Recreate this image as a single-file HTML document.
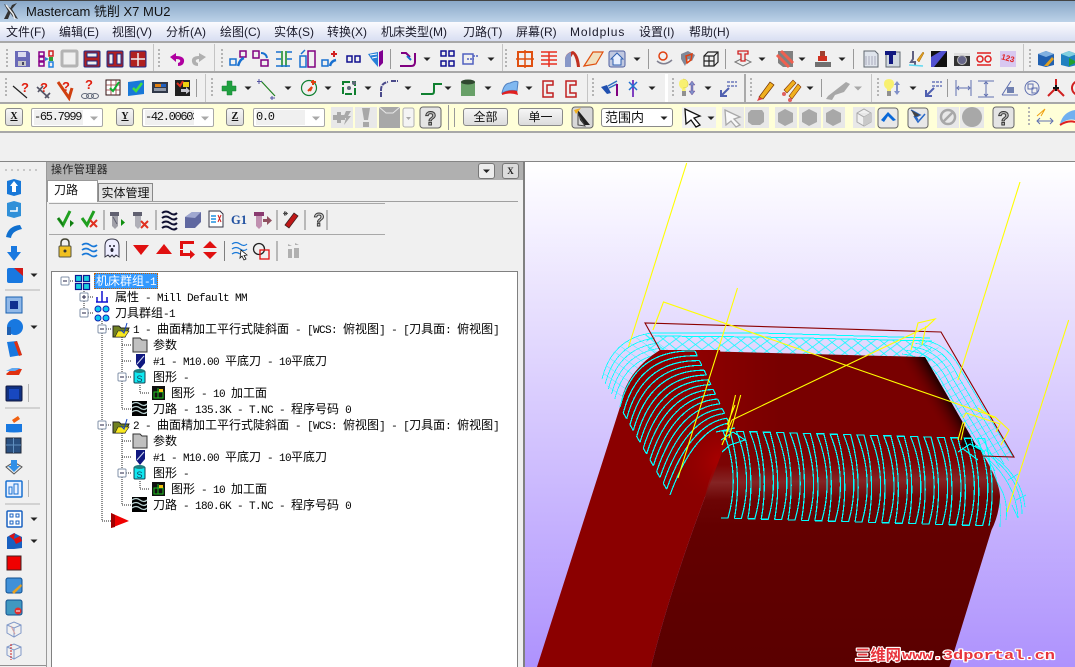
<!DOCTYPE html>
<html><head><meta charset="utf-8">
<style>
html,body{margin:0;padding:0;background:#f0f0f0}
#p{position:relative;width:1075px;height:667px;overflow:hidden;background:#f0f0f0;font-family:"Liberation Sans","Noto Sans CJK SC",sans-serif}
.a{position:absolute}
.m{position:absolute;top:23px;font-size:12px;line-height:18px;color:#1a1a2a;white-space:pre}
.t{position:absolute;height:16px;line-height:16px;font-family:"WenQuanYi Zen Hei","Noto Sans CJK SC",sans-serif;font-size:12px;color:#000;white-space:pre}
.t i{font-style:normal;font-family:"Liberation Mono",monospace;font-size:11px;letter-spacing:-.6px}
.b{position:absolute;top:108px;height:18px;border:1px solid #8a8a8a;border-radius:3px;background:linear-gradient(#f6f6f6,#dcdcdc);box-sizing:border-box;text-align:center;font-size:12px;line-height:17px;color:#111}
.c{position:absolute;top:108px;height:19px;width:72px;border:1px solid #a8a8a8;border-radius:2px;background:#fff;box-sizing:border-box}
.c span{position:absolute;left:2px;top:1px;width:49px;height:15px;background:#f0f0f0;overflow:hidden;font-family:"Liberation Mono",monospace;font-size:12px;letter-spacing:-1.3px;line-height:15px;color:#111;white-space:pre}
</style></head><body><div id="p">

<div class="a" style="left:0;top:0;width:1075px;height:1px;background:#444"></div>
<div class="a" style="left:0;top:1px;width:1075px;height:21px;background:linear-gradient(#8aa8c8,#bcd2e8)"></div>
<div class="a" style="left:26px;top:3px;font-size:13px;line-height:17px;color:#111;white-space:pre">Mastercam 铣削 X7 MU2</div>
<div class="a" style="left:0;top:22px;width:1075px;height:19px;background:linear-gradient(#fbfbfe,#d8def2)"></div>
<div class="m" style="left:6px">文件(F)</div><div class="m" style="left:59px">编辑(E)</div><div class="m" style="left:112px">视图(V)</div><div class="m" style="left:166px">分析(A)</div><div class="m" style="left:220px">绘图(C)</div><div class="m" style="left:274px">实体(S)</div><div class="m" style="left:327px">转换(X)</div><div class="m" style="left:381px">机床类型(M)</div><div class="m" style="left:463px">刀路(T)</div><div class="m" style="left:516px">屏幕(R)</div><div class="m" style="left:570px;letter-spacing:.9px">Moldplus</div><div class="m" style="left:639px">设置(I)</div><div class="m" style="left:689px">帮助(H)</div>

<div class="a" style="left:0;top:41px;width:1075px;height:2px;background:#a8a8a8"></div>
<div class="a" style="left:0;top:71px;width:1075px;height:2px;background:#a8a8a8"></div>
<div class="a" style="left:0;top:102px;width:1075px;height:2px;background:#a8a8a8"></div>
<div class="a" style="left:0;top:104px;width:1075px;height:27px;background:#ffffd8"></div>
<div class="a" style="left:0;top:131px;width:1075px;height:2px;background:#a8a8a8"></div>
<div class="a" style="left:0;top:161px;width:1075px;height:1px;background:#858585"></div>

<div class="b" style="left:5px;width:18px;font:bold 10px/16px 'Liberation Serif',serif;text-decoration:underline">X</div>
<div class="c" style="left:31px"><span>-65.7999</span></div>
<div class="b" style="left:116px;width:18px;font:bold 10px/16px 'Liberation Serif',serif;text-decoration:underline">Y</div>
<div class="c" style="left:142px"><span>-42.00603</span></div>
<div class="b" style="left:226px;width:18px;font:bold 10px/16px 'Liberation Serif',serif;text-decoration:underline">Z</div>
<div class="c" style="left:253px"><span>0.0</span></div>
<div class="b" style="left:463px;width:45px">全部</div>
<div class="b" style="left:518px;width:45px">单一</div>
<div class="b" style="left:601px;width:72px;top:108px;height:19px;text-align:left;padding-left:3px;background:#fff;font-size:13px">范围内</div>

<div class="a" style="left:0;top:162px;width:46px;height:503px;background:#f0f0f0"></div>
<div class="a" style="left:0;top:665px;width:46px;height:1px;background:#909090"></div>
<div class="a" style="left:46px;top:162px;width:1px;height:505px;background:#9a9a9a"></div>
<div class="a" style="left:47px;top:162px;width:476px;height:505px;background:#f0f0f0"></div>
<div class="a" style="left:47px;top:162px;width:476px;height:18px;background:#b0b0b0"></div>
<div class="a" style="left:51px;top:163px;font-size:11px;line-height:15px;color:#222;letter-spacing:.4px">操作管理器</div>
<div class="a" style="left:478px;top:163px;width:17px;height:16px;border:1px solid #777;border-radius:3px;box-sizing:border-box;background:#ececec"></div>
<div class="a" style="left:502px;top:163px;width:17px;height:16px;border:1px solid #777;border-radius:3px;box-sizing:border-box;background:#dcdcdc;font:bold 9px/14px 'Liberation Serif',serif;text-align:center;color:#222">X</div>
<div class="a" style="left:47px;top:201px;width:471px;height:1px;background:#a0a0a0"></div>
<div class="a" style="left:98px;top:183px;width:55px;height:18px;background:#e4e4e4;border:1px solid #888;border-bottom:0;box-sizing:border-box;font-size:12px;line-height:18px;text-align:center;color:#111">实体管理</div>
<div class="a" style="left:47px;top:180px;width:51px;height:22px;background:#fff;border:1px solid #999;border-bottom:0;box-sizing:border-box;font-size:12px;line-height:19px;color:#111;padding-left:6px">刀路</div>
<div class="a" style="left:49px;top:203px;width:336px;height:1px;background:#a8a8a8"></div>
<div class="a" style="left:49px;top:234px;width:336px;height:1px;background:#a8a8a8"></div>
<div class="a" style="left:51px;top:271px;width:467px;height:396px;background:#fff;border:1px solid #808080;border-bottom:0;box-sizing:border-box"></div>
<div class="a" style="left:523px;top:162px;width:2px;height:505px;background:#808080"></div>

<div class="a" style="left:94px;top:273px;width:64px;height:16px;background:#3399ff;outline:1px dotted #c86000;outline-offset:-1px"></div>
<div class="t" style="left:96px;top:273px;color:#fff">机床群组<i>-1</i></div>
<div class="t" style="left:115px;top:289px">属性<i> - Mill Default MM</i></div>
<div class="t" style="left:115px;top:305px">刀具群组<i>-1</i></div>
<div class="t" style="left:133px;top:321px"><i>1 - </i>曲面精加工平行式陡斜面<i> - [WCS: </i>俯视图<i>] - [</i>刀具面<i>: </i>俯视图<i>]</i></div>
<div class="t" style="left:153px;top:337px">参数</div>
<div class="t" style="left:153px;top:353px"><i>#1 - M10.00 </i>平底刀<i> - 10</i>平底刀</div>
<div class="t" style="left:153px;top:369px">图形<i> -</i></div>
<div class="t" style="left:171px;top:385px">图形<i> - 10 </i>加工面</div>
<div class="t" style="left:153px;top:401px">刀路<i> - 135.3K - T.NC - </i>程序号码<i> 0</i></div>
<div class="t" style="left:133px;top:417px"><i>2 - </i>曲面精加工平行式陡斜面<i> - [WCS: </i>俯视图<i>] - [</i>刀具面<i>: </i>俯视图<i>]</i></div>
<div class="t" style="left:153px;top:433px">参数</div>
<div class="t" style="left:153px;top:449px"><i>#1 - M10.00 </i>平底刀<i> - 10</i>平底刀</div>
<div class="t" style="left:153px;top:465px">图形<i> -</i></div>
<div class="t" style="left:171px;top:481px">图形<i> - 10 </i>加工面</div>
<div class="t" style="left:153px;top:497px">刀路<i> - 180.6K - T.NC - </i>程序号码<i> 0</i></div>

<svg class="a" style="left:0;top:0" width="1075" height="667" viewBox="0 0 1075 667">
<defs>
<linearGradient id="bg" x1="0" y1="162" x2="0" y2="667" gradientUnits="userSpaceOnUse"><stop offset="0" stop-color="#fff"/><stop offset="1" stop-color="#ae92fd"/></linearGradient>
<linearGradient id="low" x1="850" y1="430" x2="853" y2="667" gradientUnits="userSpaceOnUse"><stop offset="0" stop-color="#780000"/><stop offset=".14" stop-color="#7c0404"/><stop offset=".215" stop-color="#842424"/><stop offset=".29" stop-color="#6c0404"/><stop offset=".4" stop-color="#640000"/><stop offset="1" stop-color="#5a0000"/></linearGradient>
<linearGradient id="top" x1="690" y1="0" x2="780" y2="0" gradientUnits="userSpaceOnUse"><stop offset="0" stop-color="#900000"/><stop offset="1" stop-color="#780000"/></linearGradient>
<linearGradient id="blk" x1="952" y1="402" x2="932" y2="414" gradientUnits="userSpaceOnUse"><stop offset="0" stop-color="#1a0000"/><stop offset="1" stop-color="#780000" stop-opacity="0"/></linearGradient>
<radialGradient id="cor" cx="722" cy="462" r="50" gradientUnits="userSpaceOnUse"><stop offset="0" stop-color="#ac0000"/><stop offset="1" stop-color="#8c0000" stop-opacity="0"/></radialGradient>
<pattern id="h1" width="13" height="10" patternUnits="userSpaceOnUse" patternTransform="translate(0,335) rotate(1.200)"><path d="M0 0L6.500 5L13 0M0 10L6.500 5L13 10" fill="none" stroke="#0ff" stroke-width=".7"/></pattern>
<pattern id="h2" width="7" height="7" patternUnits="userSpaceOnUse" patternTransform="rotate(60)"><path d="M0 0V7" fill="none" stroke="#0ff" stroke-width=".8"/></pattern>
<pattern id="h3" width="8" height="8" patternUnits="userSpaceOnUse" patternTransform="rotate(-55)"><path d="M0 0V8" fill="none" stroke="#0ff" stroke-width=".7"/></pattern>
<path id="ca" d="M-3.500-1.500h7L0 2z" fill="#222"/>
<path id="cg" d="M-4-1.500h8L0 2.500z" fill="#a8a8a8"/>
<g id="gr" fill="#b4b4b4"><rect x="0" y="-10" width="2" height="2"/><rect x="0" y="-6" width="2" height="2"/><rect x="0" y="-2" width="2" height="2"/><rect x="0" y="2" width="2" height="2"/><rect x="0" y="6" width="2" height="2"/></g>
<path id="tp" d="M721 518L728 518Q740.500 474 723 431L730 431Q742.500 474 734.400 518.400" fill="none" stroke="#0ff" stroke-width="1.200"/>
<path id="fr" d="M920 340Q948 342 962 372L1013 457" fill="none" stroke="#0ff" stroke-width=".8"/>
<path id="fl" d="M602 379Q612 338 652 333" fill="none" stroke="#0ff" stroke-width=".8"/>
</defs>

<!-- viewport -->
<rect x="525" y="162" width="550" height="505" fill="url(#bg)"/>
<path d="M645 335L932 341L930 362L650 358Z" fill="url(#h1)"/>
<path d="M602 379Q612 338 652 333L680 352L620 402Z" fill="url(#h3)"/>
<path d="M932 338L1014 457L985 460L925 357Z" fill="url(#h2)"/>
<g shape-rendering="crispEdges" fill="none" stroke="#0ff">
<path d="M650 333L760 333L930 338M655 336L760 337L932 341" stroke-width="1"/>
<use href="#fl"/><use href="#fl" x="3.200" y="5"/><use href="#fl" x="6.400" y="10"/><use href="#fl" x="9.600" y="15"/><use href="#fl" x="12.800" y="20"/>
<use href="#fr"/><use href="#fr" x="-4.500" y="3.500"/><use href="#fr" x="-9" y="7"/><use href="#fr" x="-13.500" y="10.500"/><use href="#fr" x="-18" y="14"/><use href="#fr" x="-22.500" y="17.500"/>
<path stroke-width=".8" d="M985 450Q1022 474 1025 507M990 456Q1022 480 1022 514M980 452Q1016 480 1018 518L1012 505M993 467Q1002 495 1000 527M985 470Q1010 490 1006 520M1008 480L1018 474M1016 500L1026 495"/>
</g>
<path d="M537 667L620 407Q625 372 660 350L720 350L733 425L721 450L705 497Q670 590 651 667Z" fill="#8b0000"/>
<path d="M660 350L925 357L977 447L730 440L705 400Z" fill="url(#top)"/>
<path d="M925 357L977 447L920 440L900 357Z" fill="url(#blk)"/>
<path d="M730 432L977 445Q1000 480 1000 497Q999 515 991.500 530L949.400 667L651 667Q670 590 705 497Q712 465 730 432Z" fill="url(#low)"/>
<path d="M966 432L981 451L960 446Z" fill="#200000"/>
<path d="M668 480L700 420L735 430L721 455L705 497Z" fill="url(#cor)"/>
<g shape-rendering="crispEdges" fill="none" stroke="#0ff" stroke-width="1.200">
<path d="M620 407Q634 349 695 351M623.300 412.900Q638 354.300 697.300 355.800M626.700 418.700Q642 359.700 699.500 360.600M630 424.600Q646 365 701.800 365.400M633.300 430.500Q650 370.300 704.100 370.200M636.700 436.400Q654 375.700 706.400 375M640 442.200Q658 381 708.600 379.800M643.300 448.100Q662 386.300 710.900 384.600M646.600 454Q666 391.700 713.200 389.400M650 459.800Q670 397 715.400 394.200M653.300 465.700Q674 402.300 717.700 399M656.600 471.600Q678 407.700 720 403.800M660 477.400Q682 413 722.200 408.600M663.300 483.300Q686 418.300 724.500 413.400M666.600 489.200Q690 423.700 726.800 418.200M670 495Q694 429 729 423"/>
<path d="M695 351L697.300 355.800M699.500 360.600L701.800 365.400M704.100 370.200L706.400 375M708.600 379.800L710.900 384.600M713.200 389.400L715.400 394.200M717.700 399L720 403.800M722.200 408.600L724.500 413.400M726.800 418.200L729 423M623.300 412.900L626.700 418.700M630 424.600L633.300 430.500M636.700 436.400L640 442.200M643.300 448.100L646.600 454M650 459.800L653.300 465.700M656.600 471.600L660 477.400M663.300 483.300L666.600 489.200"/>
<use href="#tp"/><use href="#tp" x="13.400" y=".4"/><use href="#tp" x="26.800" y=".8"/><use href="#tp" x="40.200" y="1.200"/><use href="#tp" x="53.600" y="1.600"/><use href="#tp" x="67" y="2"/><use href="#tp" x="80.400" y="2.400"/><use href="#tp" x="93.800" y="2.800"/><use href="#tp" x="107.200" y="3.200"/><use href="#tp" x="120.600" y="3.600"/><use href="#tp" x="134" y="4"/><use href="#tp" x="147.400" y="4.400"/><use href="#tp" x="160.800" y="4.800"/><use href="#tp" x="174.200" y="5.200"/><use href="#tp" x="187.600" y="5.600"/><use href="#tp" x="201" y="6"/><use href="#tp" x="214.400" y="6.400"/><use href="#tp" x="227.800" y="6.800"/><use href="#tp" x="241.200" y="7.200"/><use href="#tp" x="254.600" y="7.600"/>
<path d="M721 440L733 432L745 440L730 445L722 452M716 432L735 428M958 452L970 444L985 452L975 445M962 448L978 460"/>
</g>
<g fill="none" stroke="#8b0000" stroke-width="1.100"><path d="M660 350L645 323L941 332L1014 457L982 456"/></g>
<g fill="none" stroke="#ff0" stroke-width="1.100">
<path d="M686.700 163L628.500 347M737.500 288L678 478"/>
<path d="M653 330L663.500 302L995 417L1009 430L1001 445"/>
<path d="M732 420L926.600 327L935 319L918 323L911 350M926 326L922 345"/>
<path d="M1020 182L958 380M1068.700 320L1007 512"/>
<path d="M725 440L735.500 395M729 438L740.700 395M722 445L732 420M727 425L735 405"/>
<path d="M963 422L958 440M965 422L961 440M963 418L966 413L1000 424L996 432M978 408L994 418"/>
</g>
<g font-family="Liberation Sans,Noto Sans CJK SC,sans-serif" font-weight="bold" fill="#e8343c" stroke="#fff" stroke-width="2.200" paint-order="stroke" stroke-linejoin="round">
<text x="855" y="660" font-size="15" textLength="46" lengthAdjust="spacingAndGlyphs">三维网</text>
<text x="902" y="659" font-size="13" font-family="Liberation Mono,monospace" textLength="153" lengthAdjust="spacingAndGlyphs">www.3dportal.cn</text>
</g>

<!-- title logo -->
<path d="M4 4L12 9L8 19L4 19L8 11ZM17 3L12 9L18 19L13 17L9 11L12 5Z" fill="#333"/><path d="M6 5L13 14L15 19" stroke="#eee" stroke-width="1.500" fill="none"/>

<!-- separators/grips toolbars -->
<g fill="#c4c4c4"><rect x="153" y="44" width="1" height="27"/><rect x="214" y="44" width="1" height="27"/><rect x="502" y="44" width="1" height="27"/><rect x="1023" y="44" width="1" height="27"/><rect x="205" y="74" width="1" height="28"/><rect x="587" y="74" width="1" height="28"/><rect x="665" y="74" width="3" height="28" fill="#fff"/><rect x="744" y="74" width="2" height="28" fill="#aaa"/><rect x="871" y="74" width="1" height="28"/></g>
<g fill="#999"><rect x="390" y="49" width="1" height="20"/><rect x="648" y="49" width="1" height="20"/><rect x="725" y="49" width="1" height="20"/><rect x="853" y="49" width="1" height="20"/><rect x="196" y="79" width="1" height="18"/><rect x="821" y="79" width="1" height="18"/><rect x="947" y="79" width="1" height="18"/><rect x="448" y="105" width="1" height="25"/><rect x="454" y="108" width="1" height="19"/></g>
<use href="#gr" x="6" y="59"/><use href="#gr" x="158" y="59"/><use href="#gr" x="221" y="59"/><use href="#gr" x="505" y="59"/><use href="#gr" x="1029" y="59"/><use href="#gr" x="5" y="88"/><use href="#gr" x="211" y="88"/><use href="#gr" x="592" y="88"/><use href="#gr" x="672" y="88"/><use href="#gr" x="750" y="88"/><use href="#gr" x="877" y="88"/><use href="#gr" x="1028" y="117"/>

<!-- row1 -->
<g transform="translate(22,59)"><path d="M-7-8H6L8-6V8H-7Z" fill="#6a6ab8"/><rect x="-4" y="-7" width="8" height="5" fill="#dcdcf0"/><rect x="-4" y="2" width="8" height="5" fill="#c8c8c8"/><rect x="0" y="3" width="2" height="3" fill="#446"/></g>
<g transform="translate(46,59)"><g fill="none" stroke="#880088" stroke-width="1.500"><rect x="-7" y="-7" width="5" height="4"/><rect x="-7" y="-2" width="5" height="4"/><rect x="-7" y="3" width="5" height="4"/></g><path d="M-1-2L3 0L-1 2Z" fill="#2a80d0"/><rect x="3" y="-8" width="4" height="5" fill="none" stroke="#d02020" stroke-width="1.500"/><rect x="3" y="-2" width="4" height="4" fill="#30a030"/><rect x="3" y="3" width="4" height="5" fill="none" stroke="#2080e0" stroke-width="1.500"/></g>
<rect x="62" y="51" width="15" height="15" rx="1" fill="#f0f0f0" stroke="#b4b4b4" stroke-width="3"/>
<g fill="#f0f0f0" stroke="#1a2a88" stroke-width="1"><rect x="84" y="51" width="16" height="16" rx="1" fill="#b02020"/><rect x="87" y="53" width="10" height="4"/><rect x="87" y="61" width="10" height="4"/><rect x="107" y="51" width="16" height="16" rx="1" fill="#b02020"/><rect x="109" y="54" width="4" height="10"/><rect x="117" y="54" width="4" height="10"/><rect x="130" y="51" width="16" height="16" rx="1" fill="#b02020"/></g>
<path d="M138 53V66M131 59H145" stroke="#f0f0f0" stroke-width="1.500"/>
<path d="M170 57L176 53V56Q185 56 184 62Q183 66 178 66V63Q181 62 180 60Q179 59 176 59V62Z" fill="#b000a0"/>
<path d="M206 57L199 53V56Q191 56 192 62Q193 66 198 66V63Q195 62 196 60Q197 59 199 59V62Z" fill="#b0b0b0"/>
<g fill="none" stroke-width="1.500">
<g transform="translate(238,59)"><rect x="2" y="-8" width="6" height="6" stroke="#800080"/><rect x="-8" y="0" width="6" height="6" stroke="#1870d0"/><path d="M0 7Q2 0 6-1" stroke="#1870d0" stroke-width="2.500"/></g>
<g transform="translate(261,59)"><rect x="-8" y="-8" width="6" height="7" stroke="#800080"/><rect x="0" y="1" width="7" height="6" stroke="#800080"/><path d="M0-6Q5-6 6-1" stroke="#1870d0" stroke-width="2"/></g>
<g transform="translate(284,59)"><path d="M-2-8V8M2-8V8" stroke="#182"/><path d="M-8-7H-3M-8 0H-3M3-7H8M3 0H8M-8 7H6" stroke="#1870d0"/></g>
<g transform="translate(307,59)"><rect x="1" y="-8" width="7" height="16" stroke="#800080"/><rect x="-7" y="-3" width="6" height="11" stroke="#1870d0"/><path d="M-6-5L-2-9" stroke="#1870d0"/></g>
<g transform="translate(330,59)"><rect x="-8" y="1" width="6" height="6" stroke="#1870d0"/><path d="M0 7Q1 2 6 1" stroke="#1870d0" stroke-width="2.500"/><path d="M4-8V-2M1-5H7" stroke="#d02020" stroke-width="2"/></g>
<rect x="347" y="56" width="5" height="6" stroke="#101090"/><rect x="355" y="56" width="5" height="6" stroke="#101090"/>
<g transform="translate(408,59)"><path d="M-8 7H3Q7 7 7 3V-6M-7-6H-2L2-2" stroke="#800080" stroke-width="2"/><path d="M-1-3L3 1" stroke="#1870d0" stroke-width="2"/></g>
<g stroke="#101090"><rect x="441" y="51" width="5" height="5"/><rect x="449" y="51" width="5" height="5"/><rect x="441" y="61" width="5" height="5"/><rect x="449" y="61" width="5" height="5"/></g>
<g transform="translate(471,59)" stroke="#5060c0"><rect x="-8" y="-5" width="10" height="10"/><path d="M2 -3H8M-4 0H3" stroke-dasharray="2 1"/></g>
<g stroke="#e05010" stroke-width="2"><rect x="518" y="52" width="14" height="14"/><path d="M525 50V68M516 59H534" stroke-width="1.500"/></g>
<path d="M541 52H557M541 56H557M541 60H557M541 64H557M549 52V67" stroke="#e83020" stroke-width="1.500"/>
</g>
<path d="M379 52L383 50V63L379 67Z" fill="#800090"/><path d="M368 54L378 52V67L372 60Z" fill="#2880d8"/><path d="M370 55L377 54M372 58L377 57" stroke="#fff"/>
<path d="M565 67V60Q565 53 573 51Q579 54 580 67H577Q576 58 573 54Z" fill="#c03020"/><path d="M565 67V60Q565 54 571 52V67Z" fill="#8898c8"/>
<path d="M584 66L593 52L603 52L596 64Z" fill="#f0e0c0" stroke="#e05010" stroke-width="1.200"/>
<g transform="translate(617,59)"><rect x="-8" y="-8" width="16" height="16" rx="2" fill="#c0c8e0" stroke="#5060a0"/><path d="M-4 6V0H-6L0-6L6 0H4V6Z" fill="#e8f0ff" stroke="#3060b0"/></g>
<g transform="translate(664,59)" fill="none" stroke="#e04010" stroke-width="1.500"><circle cx="-1" cy="-3" r="4"/><path d="M-7 2Q0 8 8 1" stroke="#808090"/></g>
<g transform="translate(688,59)"><path d="M-7-5L0-8L7-4L4 2L0 0L-3 7L-7 0Z" fill="#808898"/><path d="M-2-3L4-5L3 1L-1 4Z" fill="none" stroke="#e04010" stroke-width="1.500"/></g>
<g transform="translate(711,59)" fill="none" stroke="#222" stroke-width="1.200"><path d="M-7-3L-3-7H7V3L3 7H-7Z"/><path d="M-7-3H3V7M3-3L7-7M-2-3V7M-7 2H3"/></g>
<g transform="translate(743,59)"><path d="M-8 3L0-1L8 3L0 7Z" fill="none" stroke="#777"/><path d="M-5-8H5V-5H2V2H-2V-5H-5Z" fill="#e8e8e8" stroke="#d02020" stroke-width="1.300"/></g>
<g transform="translate(785,59)"><path d="M-7-8H8V8H-2L-7 4Z" fill="#808080"/><path d="M-8-4L4 8M-4-8L8 4" stroke="#f06050" stroke-width="3"/></g>
<g transform="translate(823,59)"><rect x="-3" y="-8" width="5" height="5" fill="#a04030"/><rect x="-5" y="-3" width="9" height="5" fill="#d03020"/><rect x="-8" y="3" width="16" height="5" fill="#707070"/></g>
<g transform="translate(871,59)"><path d="M-7-8H4L7-5V8H-7Z" fill="#dfe4ec" stroke="#606870"/><path d="M-5 -3V6M-2 -3V6M1 -3V6M4 -3V6" stroke="#aab"/></g>
<g transform="translate(893,59)"><rect x="-7" y="-7" width="14" height="15" fill="#d0d8e0" stroke="#606870"/><path d="M-8-8H3V-4H0V5H-4V-4H-8Z" fill="#101880"/></g>
<g transform="translate(916,59)"><path d="M-3-8V0L-5 3H-1V7" stroke="#606080" stroke-width="2" fill="none"/><path d="M1 1L7-7L8-6L3 3Z" fill="#e0a020" stroke="#a06000" stroke-width=".5"/><path d="M-7 6L7 7" stroke="#60d8f0" stroke-width="1.500"/></g>
<g transform="translate(939,59)"><rect x="-8" y="-8" width="16" height="16" fill="#101010"/><path d="M-8 8V-2L2-8H8L-5 8Z" fill="#5050d0"/></g>
<g transform="translate(962,59)"><rect x="-8" y="-6" width="16" height="13" fill="#333"/><rect x="-8" y="-6" width="16" height="3" fill="#ddd"/><circle cx="0" cy="1" r="4.500" fill="#668" stroke="#bbb"/></g>
<g transform="translate(984,59)" fill="none" stroke="#e02020" stroke-width="1.500"><path d="M-7-6H7M-7 6H7"/><circle cx="-4" cy="0" r="3"/><circle cx="4" cy="0" r="3"/></g>
<g transform="translate(1008,59)"><rect x="-8" y="-8" width="16" height="16" fill="#d8c8f0"/><text x="-7" y="2" font-size="8" font-weight="bold" fill="#e02020" font-family="Liberation Sans,sans-serif" transform="rotate(15)">123</text></g>
<g transform="translate(1046,59)"><path d="M-8-5L0-8L8-5V6L0 8L-8 6Z" fill="#2060b0"/><path d="M-8-5L0-8L8-5L0-2Z" fill="#80b0e0"/><path d="M-2 7L6-2L8 0L2 7Z" fill="#e0a020"/></g>
<g transform="translate(1069,59)"><path d="M-8-5L0-8L8-5V6L0 8L-8 6Z" fill="#2080c0"/><path d="M-8-5L0-8L8-5L0-2Z" fill="#80d0e0"/><path d="M0-1L8 3L0 7Z" fill="#20a030"/></g>
<use href="#ca" x="427" y="59"/><use href="#ca" x="491" y="59"/><use href="#ca" x="637" y="59"/><use href="#ca" x="762" y="59"/><use href="#ca" x="802" y="59"/><use href="#ca" x="842" y="59"/>

<!-- row2 -->
<g font-family="Liberation Sans,sans-serif" font-weight="bold" font-size="13" fill="#e02010">
<text x="21" y="92">?</text><text x="40" y="92">?</text><text x="62" y="91">?</text><text x="85" y="89">?</text></g>
<path d="M13 86L27 98" stroke="#222" stroke-width="1.200"/>
<path d="M37 87L49 98M38 92L43 86M45 98L50 93" stroke="#556" stroke-width="1.700" fill="none"/>
<path d="M58 82L69 98L72 88" stroke="#d04010" stroke-width="3" fill="none"/>
<g fill="none" stroke="#606878"><ellipse cx="85" cy="96" rx="3.500" ry="2.500"/><ellipse cx="90" cy="96" rx="3.500" ry="2.500"/><ellipse cx="95" cy="96" rx="3.500" ry="2.500"/></g>
<g transform="translate(113,88)"><rect x="-7" y="-8" width="14" height="15" fill="#fff" stroke="#301010"/><path d="M-7-3H7M-7 2H7M-2-8V7M3-8V7" stroke="#903030" stroke-width=".8"/><path d="M-3 0L0 3L6-6" stroke="#10b030" stroke-width="2" fill="none"/></g>
<g transform="translate(136,88)"><path d="M-8-6L8-8V6L-8 8Z" fill="#1878d8"/><path d="M-3 0L0 3L6-5" stroke="#40e040" stroke-width="2.500" fill="none"/></g>
<g transform="translate(160,88)"><rect x="-8" y="-6" width="16" height="11" fill="#303848"/><rect x="-5" y="-4" width="6" height="3" fill="#e08010"/><rect x="1" y="-4" width="5" height="3" fill="#2060c0"/><rect x="-6" y="0" width="12" height="3" fill="#9098a8"/></g>
<g transform="translate(183,88)"><rect x="-8" y="-8" width="15" height="16" fill="#202020"/><rect x="0" y="-6" width="6" height="5" fill="#f0d010"/><path d="M-6-5L-3-2L0-7" stroke="#e03020" stroke-width="2" fill="none"/><path d="M-2 1H3V-1L7 3L3 6V4H-2Z" fill="#c8c8d0"/></g>
<g transform="translate(229,88)"><path d="M-2-7H3V-2H7V3H3V7H-2V3H-7V-2H-2Z" fill="#20a040" stroke="#108030" stroke-width=".5"/></g>
<path d="M261 81L275 96" stroke="#208020" stroke-width="1.200"/><path d="M259 79V84M257 81.500H262M272 96V100M270 98H275" stroke="#5050a0"/>
<g transform="translate(309,88)" fill="none"><circle r="7.500" stroke="#108030" stroke-width="1.200"/><path d="M-1 3L3-1L1 3" stroke="#e04010" stroke-width="2"/><path d="M4-8V-3M2-6H7" stroke="#e04010" stroke-width="2"/></g>
<g transform="translate(349,88)"><path d="M-6-6H6V6H-6Z" fill="none" stroke="#108030" stroke-width="2" stroke-dasharray="7 2"/><circle r="2" fill="#606878"/><circle cx="5" cy="-5" r="2" fill="#606878"/></g>
<path d="M381 97V90Q381 83 388 82M391 81H398" stroke="#4a4a8a" stroke-width="2" fill="none" stroke-dasharray="5 1"/>
<path d="M421 94H432Q434 94 434 91V84H442" stroke="#108030" stroke-width="2" fill="none"/>
<g transform="translate(468,88)"><rect x="-7" y="-6" width="14" height="14" fill="#68a068"/><ellipse cy="-6" rx="7" ry="2.500" fill="#304830"/></g>
<g transform="translate(510,88)"><path d="M-8 5Q-6-5 0-5Q6-8 8-6L7 3Q0 1-8 5Z" fill="#80b8f0" stroke="#5080c0"/><path d="M-8 5Q0 1 7 3L8 7Q0 4-8 7Z" fill="#e02020"/></g>
<g fill="none" stroke="#c02020" stroke-width="1.500"><path d="M543 81H553V85H547V93H553V97H543Z"/><path d="M566 81H576V85H570V93H576V97H566Z"/></g>
<g transform="translate(609,88)"><path d="M-8-1L-2-3L2 5L-2 6Z" fill="#2050b0"/><path d="M-1-2L8-7M0 0L8-4" stroke="#3070c0" stroke-width="1.500"/><path d="M8-4V8" stroke="#800080" stroke-width="2"/></g>
<g transform="translate(633,88)"><path d="M0-8V9" stroke="#8040c0" stroke-width="2"/><path d="M-4-6L4 2M4-6L-4 2" stroke="#2070d0" stroke-width="1.500"/></g>
<g transform="translate(686,88)"><path d="M-2-9Q-7-9-7-4Q-7-1-4 1V4H0Z" fill="#f8f070"/><path d="M-3 0Q3 0 2-5Q1-9-3-9" fill="#f8f070" stroke="#d8c840" stroke-width=".5"/><rect x="-4" y="3" width="4" height="5" fill="#909090"/><path d="M6-7L3-3H5V3H3L6 7L9 3H7V-3H9Z" fill="#8090c8" stroke="#406" stroke-width=".3"/></g>
<g transform="translate(728,88)" fill="none" stroke-width="1.200"><path d="M-1-6H9M-1-2H9" stroke="#5060b0" stroke-dasharray="3 1"/><path d="M-7 8L1 0M-7 2V8H-1" stroke="#5060b0" stroke-width="2"/></g>
<path d="M759 97L770 82L774 85L763 99Z" fill="#f0b020" stroke="#703000" stroke-width=".7"/><path d="M759 97L763 99L757 101Z" fill="#e04040"/>
<g fill="#f0b020" stroke="#803000" stroke-width=".6"><path d="M784 90L793 80L796 83L787 93Z"/><path d="M789 96L798 84L801 87L792 99Z"/></g><circle cx="784" cy="94" r="2" fill="#e06060"/><circle cx="790" cy="100" r="2" fill="#e06060"/>
<path d="M828 96L846 82L850 84L844 92L835 95L832 100L826 99Z" fill="#a8a8a8"/>
<g transform="translate(891,88)"><path d="M-2-9Q-7-9-7-4Q-7-1-4 1V4H0V1Q3-1 3-4Q3-9-2-9Z" fill="#f8f070"/><rect x="-4" y="3" width="4" height="5" fill="#909090"/><path d="M6-7L3-3H5V3H3L6 7L9 3H7V-3H9Z" fill="#8090c8"/></g>
<g transform="translate(933,88)" fill="none" stroke-width="1.200"><path d="M-1-6H9M-1-2H9" stroke="#5060b0" stroke-dasharray="3 1"/><path d="M-7 8L1 0M-7 2V8H-1" stroke="#5060b0" stroke-width="2"/></g>
<g fill="none" stroke="#6070b0" stroke-width="1"><path d="M956 80V96M971 80V96M958 88H969M959 86L957 88L959 90M968 86L970 88L968 90"/><path d="M978 81H994M978 97H994M986 82V96M984 84L986 82L988 84M984 94L986 96L988 94"/><path d="M1002 95H1018M1002 95L1011 81"/><circle cx="1032" cy="88" r="7"/><rect x="1028" y="84" width="5" height="5"/><rect x="1032" y="88" width="5" height="5"/></g>
<rect x="1007" y="87" width="7" height="6" fill="#7080b0"/>
<path d="M1056 79V88M1056 88L1048 96M1056 88L1064 96" stroke="#d02020" stroke-width="2" fill="none"/><path d="M1053 88H1059M1056 85V91" stroke="#111" stroke-width="2"/>
<circle cx="1079" cy="88" r="7" fill="none" stroke="#d02020" stroke-width="2"/>
<use href="#ca" x="248" y="88"/><use href="#ca" x="288" y="88"/><use href="#ca" x="328" y="88"/><use href="#ca" x="368" y="88"/><use href="#ca" x="408" y="88"/><use href="#ca" x="448" y="88"/><use href="#ca" x="488" y="88"/><use href="#ca" x="529" y="88"/><use href="#ca" x="652" y="88"/><use href="#ca" x="708" y="88"/><use href="#ca" x="810" y="88"/><use href="#cg" x="858" y="88"/><use href="#ca" x="913" y="88"/>

<!-- row3 -->
<use href="#cg" x="94" y="118"/><use href="#cg" x="205" y="118"/><use href="#cg" x="316" y="118"/>
<rect x="331" y="107" width="22" height="21" fill="#e8e8e8"/><path d="M333 115H337V112H341V115H345V120H341V123H337V120H333ZM346 111H351L348 116H351L344 125L346 118H343Z" fill="#a8a8a8"/>
<rect x="355" y="107" width="22" height="21" fill="#e8e8e8"/><path d="M362 108H370L368 120H364ZM363 122H369V127H363Z" fill="#a8a8a8"/>
<rect x="379" y="107" width="21" height="21" fill="#a8a8a8"/><path d="M379 107L386 113H393L400 107" fill="none" stroke="#e8e8e8"/>
<rect x="403" y="108" width="11" height="19" rx="2" fill="#f4f4f4" stroke="#b0b0b0"/><path d="M406 117h5l-2.500 3z" fill="#a8a8a8"/>
<g id="hp"><rect x="420" y="107" width="21" height="21" rx="3" fill="#e4e4e4" stroke="#666"/><text x="430.500" y="125" font-family="Liberation Sans,sans-serif" font-size="19" font-weight="bold" text-anchor="middle" fill="#b0b0b0" stroke="#333" stroke-width=".9">?</text></g>
<rect x="572" y="107" width="21" height="21" rx="3" fill="#d8d8d8" stroke="#666"/><path d="M577 109L590 125L584 125L580 120Z" fill="#202020"/><path d="M574 110L581 108L576 114Z" fill="#f0b020"/><path d="M578 114L585 126L578 125Z" fill="none" stroke="#444"/>
<use href="#ca" x="664" y="118"/>
<rect x="682" y="107" width="34" height="21" fill="#f0f0f0"/><path d="M685 109L700 116L694 118L700 125L696 127L691 120L686 124Z" fill="#fff" stroke="#111" stroke-width="1.300"/><use href="#ca" x="711" y="118"/>
<g fill="#e8e8e8"><rect x="722" y="107" width="22" height="21"/><rect x="745" y="107" width="24" height="21"/><rect x="775" y="107" width="22" height="21"/><rect x="799" y="107" width="22" height="21"/><rect x="823" y="107" width="22" height="21"/><rect x="853" y="107" width="22" height="21"/><rect x="937" y="107" width="22" height="21"/><rect x="960" y="107" width="24" height="21"/></g>
<path d="M725 110L740 117L734 119L740 125L736 127L731 121L726 125Z" fill="#f8f8f8" stroke="#a8a8a8" stroke-width="1.300"/>
<g fill="#a8a8a8"><path d="M751 110H762L764 113V122L760 125H752L748 122V113Z"/><path d="M778 113L785 109L793 113V122L785 126L778 122Z"/><path d="M802 113L809 109L817 113V122L809 126L802 122Z"/><path d="M826 113L833 109L841 113V122L833 126L826 122Z"/><circle cx="972" cy="117" r="10"/></g>
<path d="M857 113L864 109L871 113V122L864 126L857 122ZM857 113L864 117L871 113M864 117V126" fill="#f0f0f0" stroke="#a8a8a8"/><path d="M864 117L871 113V122L864 126Z" fill="#c8c8c8"/>
<circle cx="948" cy="117" r="7" fill="none" stroke="#a8a8a8" stroke-width="2.500"/><path d="M943 122L953 112" stroke="#a8a8a8" stroke-width="2.500"/>
<rect x="878" y="108" width="20" height="20" rx="3" fill="#e8e8e8" stroke="#666"/><path d="M881 120L888 112L896 120L893 121L888 116L884 122Z" fill="#0868d8"/>
<rect x="908" y="108" width="20" height="20" rx="3" fill="#e8e8e8" stroke="#666"/><path d="M911 110L920 115L916 117L918 120M914 116L918 122L925 114" fill="none" stroke="#2868c8" stroke-width="1.500"/><path d="M911 110L920 115L915 117Z" fill="#444"/>
<rect x="993" y="107" width="21" height="21" rx="3" fill="#e4e4e4" stroke="#666"/><text x="1003.500" y="125" font-family="Liberation Sans,sans-serif" font-size="19" font-weight="bold" text-anchor="middle" fill="#b0b0b0" stroke="#333" stroke-width=".9">?</text>
<path d="M1037 121H1053M1040 118L1037 121L1040 124M1050 118L1053 121L1050 124" fill="none" stroke="#6070b0"/><path d="M1037 116L1045 109L1041 116" stroke="#f0a010" fill="none"/>
<path d="M1060 124Q1063 112 1075 110V120Q1068 118 1060 124Z" fill="#70b0f0"/><path d="M1060 125Q1068 120 1075 122" stroke="#e02020" stroke-width="2" fill="none"/>

<!-- panel title caret -->
<use href="#ca" x="486.500" y="171"/>

<!-- op toolbar row 1 -->
<g fill="none" stroke="#222" stroke-width="1" opacity=".55"><path d="M104 210V230M156 210V230M277 210V230M305 210V230M327 210V230M126.500 241V261M224.500 241V261M277 241V261"/></g>
<path d="M58 218L63 225L70 211" stroke="#20a020" stroke-width="3" fill="none"/><path d="M70 220V227L74 223Z" fill="#108010"/><path d="M58 218L63 225" stroke="#106010" stroke-width="1"/>
<path d="M82 218L87 225L94 211" stroke="#20a020" stroke-width="3" fill="none"/><path d="M90 220L97 227M97 220L90 227" stroke="#e03020" stroke-width="2"/>
<g><rect x="110" y="212" width="9" height="4" fill="#606070"/><path d="M112 216H118V226L115 229L112 226Z" fill="#a0a0a8"/><path d="M113 217L117 224" stroke="#606070"/><path d="M121 219V226L125 222.500Z" fill="#109010"/></g>
<g><rect x="133" y="212" width="9" height="4" fill="#606070"/><path d="M135 216H141V226L138 229L135 226Z" fill="#b0b0b8"/><path d="M141 221L148 228M148 221L141 228" stroke="#e03020" stroke-width="2"/></g>
<g fill="none" stroke="#101030" stroke-width="2"><path d="M162 213Q166 210 170 213T177 213M162 218Q166 215 170 218T177 218M162 223Q166 220 170 223T177 223M162 228Q166 225 170 228T177 228"/></g>
<path d="M185 217L192 212H201V222L195 228H185Z" fill="#6068a0"/><path d="M185 217L192 212H201L195 218Z" fill="#a0a8d0"/>
<g transform="translate(216,219)"><path d="M-7-8H4L7-5V8H-7Z" fill="#fff" stroke="#334"/><path d="M-5-3H0M-5 0H0M-5 3H0" stroke="#2090e0" stroke-width="1.500"/><path d="M2-4L5 3M5-4L2 3" stroke="#d02020"/></g>
<text x="231" y="224" font-family="Liberation Serif,serif" font-weight="bold" font-size="13" fill="#2050a0" textLength="16" lengthAdjust="spacingAndGlyphs">G1</text>
<g><rect x="254" y="212" width="10" height="4" fill="#8a3a70"/><path d="M256 216H262V226L259 229L256 226Z" fill="#c090b0"/><path d="M263 219H267V216L272 220.500L267 225V222H263Z" fill="#905060"/></g>
<g transform="translate(291,219)"><path d="M-6 6L3-6L7-3L-2 9Z" fill="#c01818" stroke="#402020" stroke-width=".8"/><path d="M-6-8V-3M-8-5.500H-3M-7-7L-4-4M-4-7L-7-4" stroke="#333" stroke-width=".8"/></g>
<text x="319" y="226" font-family="Liberation Sans,sans-serif" font-weight="bold" font-size="18" text-anchor="middle" fill="#c8c8c8" stroke="#333" stroke-width=".9">?</text>

<!-- op toolbar row 2 -->
<g><path d="M61 246V243Q61 239 65 239Q69 239 69 243V246" fill="none" stroke="#443" stroke-width="1.500"/><rect x="59" y="246" width="12" height="11" rx="1" fill="#f0c020" stroke="#554"/><circle cx="65" cy="251" r="1.500" fill="#333"/></g>
<g fill="none" stroke="#1878d8" stroke-width="1.700"><path d="M82 245Q86 242 90 245T97 245M82 250Q86 247 90 250T97 250M82 255Q86 252 90 255T97 255"/></g>
<path d="M105 257V246Q105 239 112 239Q119 239 119 246V257L116 255L114 257L112 255L110 257L108 255Z" fill="#eef" stroke="#334"/><circle cx="110" cy="246" r="1" fill="#223"/><circle cx="114" cy="246" r="1" fill="#223"/><ellipse cx="112" cy="250" rx="1.500" ry="2" fill="#223"/>
<path d="M133 245H149L141 255Z" fill="#e01010"/><path d="M156 254H172L164 244Z" fill="#e01010"/>
<path d="M180 241H194V244H183V249H180ZM183 253H190V250L195 254.500L190 259V256H180V250H183Z" fill="#e01010"/>
<path d="M203 248H217L210 241ZM203 252H217L210 259Z" fill="#e01010"/><path d="M203 250H217" stroke="#f0f0f0"/>
<g fill="none" stroke="#1878d8" stroke-width="1.200"><path d="M232 244Q236 241 240 244T247 244M232 249Q236 246 240 249T247 249M232 254Q236 251 240 254"/></g>
<path d="M241 250L247 255L244 255.500L246 259L244 260L242 256L240 258Z" fill="#fff" stroke="#111" stroke-width=".8"/>
<circle cx="259" cy="249" r="5.500" fill="none" stroke="#222" stroke-width="1.300"/><rect x="260" y="250" width="9" height="9" fill="none" stroke="#e01010" stroke-width="1.300"/>
<path d="M288 249H292V258H288ZM294 248H299V258H294ZM288 244L292 246H288ZM295 243L299 245H295Z" fill="#b0b0b0"/>

<!-- left dock -->
<g fill="#c8c8c8"><rect x="5" y="169" width="2" height="2"/><rect x="11" y="169" width="2" height="2"/><rect x="17" y="169" width="2" height="2"/><rect x="23" y="169" width="2" height="2"/><rect x="29" y="169" width="2" height="2"/><rect x="35" y="169" width="2" height="2"/></g>
<path d="M5 290H40M5 408H40M5 504H40" stroke="#b4b4b4"/><path d="M28.500 384V402M28.500 480V497" stroke="#b4b4b4"/>
<g><path d="M7 181L14 179L21 181V194L14 196L7 194Z" fill="#1878d8"/><path d="M14 181L18 186H16V192H12V186H10Z" fill="#fff"/></g>
<g><path d="M7 203L14 201L21 203V216L14 218L7 216Z" fill="#3090d8"/><path d="M10 211H17V207" stroke="#fff" stroke-width="1.500" fill="none"/></g>
<path d="M6 237Q8 226 20 225L22 229Q12 231 11 238Z" fill="#1070d0"/>
<path d="M11 246H17V252H21L14 261L7 252H11Z" fill="#1878e0"/>
<g><rect x="7" y="268" width="16" height="15" rx="2" fill="#1878e0"/><path d="M14 268H23V276Z" fill="#d01818"/></g>
<g><rect x="6" y="297" width="16" height="16" fill="#90b8e8" stroke="#1860b0"/><rect x="10" y="301" width="8" height="8" fill="#103090"/></g>
<g><circle cx="15" cy="327" r="8" fill="#1878e0"/><path d="M7 327H11V335H7Z" fill="#2060b0"/></g>
<g><path d="M7 342L17 341L22 355L10 357Z" fill="#1878e0"/><path d="M17 341L22 355L19 356L14 342Z" fill="#e03010"/></g>
<path d="M6 374L12 369H22L19 375H7Z" fill="#e03010"/><path d="M6 371L12 368H21L15 371Z" fill="#60a8f0"/>
<g><rect x="6" y="386" width="16" height="15" rx="1" fill="#103080" stroke="#101840"/><rect x="9" y="389" width="10" height="10" fill="#1848c0"/></g>
<g><path d="M6 424H22V432Q14 433 6 432Z" fill="#1878e0"/><path d="M12 420L18 416L20 419L14 423Z" fill="#f06010"/></g>
<g><rect x="6" y="438" width="15" height="15" fill="#2a5080" stroke="#202838"/><path d="M13.500 438V453M6 445H21" stroke="#6090c0"/></g>
<g><path d="M6 467L14 474L22 467L14 462Z" fill="#e8e8e8" stroke="#555"/><path d="M11 460H17V466H20L14 472L8 466H11Z" fill="#3090e8"/></g>
<g><rect x="6" y="481" width="16" height="16" rx="1" fill="#e8f0ff" stroke="#1870d0" stroke-width="1.500"/><path d="M9 494V487H12V494ZM14 494V484H18V494Z" fill="none" stroke="#1870d0"/></g>
<g><rect x="7" y="511" width="15" height="16" rx="1" fill="#fff" stroke="#1860c0" stroke-width="1.500"/><g fill="none" stroke="#1860c0"><rect x="10" y="514" width="3" height="3"/><rect x="16" y="514" width="3" height="3"/><rect x="10" y="521" width="3" height="3"/><rect x="16" y="521" width="3" height="3"/></g></g>
<g><path d="M7 537L14 533L22 537V548L14 549H7Z" fill="#1860c0"/><path d="M9 536L15 533L14 539L20 536L22 541L16 544L14 540Z" fill="#e01010"/></g>
<rect x="7" y="556" width="14" height="14" fill="#f00000" stroke="#402020"/>
<g><rect x="6" y="578" width="16" height="15" rx="2" fill="#4090d8" stroke="#105090"/><path d="M12 592L21 584L22 586L14 594Z" fill="#e8a020"/></g>
<g><rect x="6" y="600" width="16" height="15" rx="2" fill="#4098c0" stroke="#105090"/><circle cx="18" cy="611" r="3.500" fill="#e03030"/><path d="M16 611H20" stroke="#fff"/></g>
<g fill="none" stroke="#8098c8"><path d="M7 625L14 622L21 625V633L14 637L7 633ZM7 625L14 628L21 625M14 628V637"/><path d="M7 647L14 644L21 647V655L14 659L7 655ZM7 647L14 650L21 647M14 650V659"/></g>
<path d="M11 626L15 634" stroke="#d8a0a0"/><path d="M11 644V660" stroke="#d02020" stroke-dasharray="2 1"/>
<use href="#ca" x="34" y="275"/><use href="#ca" x="34" y="327"/><use href="#ca" x="34" y="519"/><use href="#ca" x="34" y="541"/>

<!-- tree lines -->
<g fill="none" stroke="#222" stroke-dasharray="1 1" shape-rendering="crispEdges">
<path d="M68 281H74M84 289V313M84 297H94M84 313H94M102 321V521H113M102 329H112M122 337V409M122 345H132M122 361H132M122 377H131M140 385V393H150M122 409H132"/>
<path d="M102 425H112M122 433V505M122 441H132M122 457H132M122 473H131M140 481V489H150M122 505H132"/>
</g>
<g fill="#fff" stroke="#8090a8"><rect x="61" y="277" width="8" height="8" rx="1"/><rect x="80" y="293" width="8" height="8" rx="1"/><rect x="80" y="309" width="8" height="8" rx="1"/><rect x="98" y="325" width="8" height="8" rx="1"/><rect x="118" y="373" width="8" height="8" rx="1"/><rect x="98" y="421" width="8" height="8" rx="1"/><rect x="118" y="469" width="8" height="8" rx="1"/></g>
<path d="M63 281H67M82 297H86M84 295V299M82 313H86M100 329H104M120 377H124M100 425H104M120 473H124" stroke="#224"/>
<g fill="#18d0e0" stroke="#101890" stroke-width="1.200"><rect x="75.500" y="275.500" width="6" height="6"/><rect x="83.500" y="275.500" width="6" height="6"/><rect x="75.500" y="283.500" width="6" height="6"/><rect x="83.500" y="283.500" width="6" height="6"/></g>
<path d="M96 302H108M97 302V297M102 302V291M107 302V297" stroke="#1010d0" stroke-width="1.500" fill="none"/>
<g fill="#10c8f0" stroke="#1020b0"><circle cx="98" cy="309" r="3"/><circle cx="106" cy="309" r="3"/><circle cx="98" cy="318" r="3"/><circle cx="106" cy="318" r="3"/></g>
<g id="tr1"><path d="M113 326H119L121 328H129L125 337H113Z" fill="#708020" stroke="#222"/><path d="M118 331H129L125 337H115Z" fill="#f8e820" stroke="#222" stroke-width=".6"/><path d="M121 330L124 333L127 323" stroke="#1040c0" fill="none"/></g>
<g id="tr2"><path d="M133 338H140L142 340H147V352H133Z" fill="#c0c0c0" stroke="#333"/></g>
<path d="M136 354H145V363L140 369L136 364Z" fill="#101880"/><path d="M137 364L144 356" stroke="#d0d8f0"/>
<g><rect x="134" y="371" width="11" height="12" rx="1" fill="#10e8f0" stroke="#104050"/><ellipse cx="139.500" cy="371" rx="5.500" ry="2" fill="#208080"/><text x="139.500" y="382" font-family="Liberation Sans,sans-serif" font-size="9" text-anchor="middle" fill="#104060">S</text></g>
<g><rect x="152" y="386" width="13" height="14" fill="#101010"/><path d="M154 392H163V398H154ZM158 388V398" stroke="#20c020" fill="none"/><rect x="159" y="389" width="4" height="3" fill="#f0c010"/></g>
<g><rect x="132" y="401" width="15" height="15" fill="#000"/><path d="M132 404Q136 401 140 404T147 404M132 408Q136 405 140 408T147 408M132 412Q136 409 140 412T147 412" stroke="#b8d0d0" stroke-width="1.300" fill="none"/></g>
<path d="M113 422H119L121 424H129L125 433H113Z" fill="#708020" stroke="#222"/><path d="M118 427H129L125 433H115Z" fill="#f8e820" stroke="#222" stroke-width=".6"/><path d="M121 426L124 429L127 419" stroke="#1040c0" fill="none"/>
<path d="M133 434H140L142 436H147V448H133Z" fill="#c0c0c0" stroke="#333"/>
<path d="M136 450H145V459L140 465L136 460Z" fill="#101880"/><path d="M137 460L144 452" stroke="#d0d8f0"/>
<rect x="134" y="467" width="11" height="12" rx="1" fill="#10e8f0" stroke="#104050"/><ellipse cx="139.500" cy="467" rx="5.500" ry="2" fill="#208080"/><text x="139.500" y="478" font-family="Liberation Sans,sans-serif" font-size="9" text-anchor="middle" fill="#104060">S</text>
<rect x="152" y="482" width="13" height="14" fill="#101010"/><path d="M154 488H163V494H154ZM158 484V494" stroke="#20c020" fill="none"/><rect x="159" y="485" width="4" height="3" fill="#f0c010"/>
<rect x="132" y="497" width="15" height="15" fill="#000"/><path d="M132 500Q136 497 140 500T147 500M132 504Q136 501 140 504T147 504M132 508Q136 505 140 508T147 508" stroke="#b8d0d0" stroke-width="1.300" fill="none"/>
<path d="M111 513L129 521L111 528Z" fill="#f00000"/><path d="M111 513L115 515V527L111 528Z" fill="#a00000"/>
</svg>
</div></body></html>
